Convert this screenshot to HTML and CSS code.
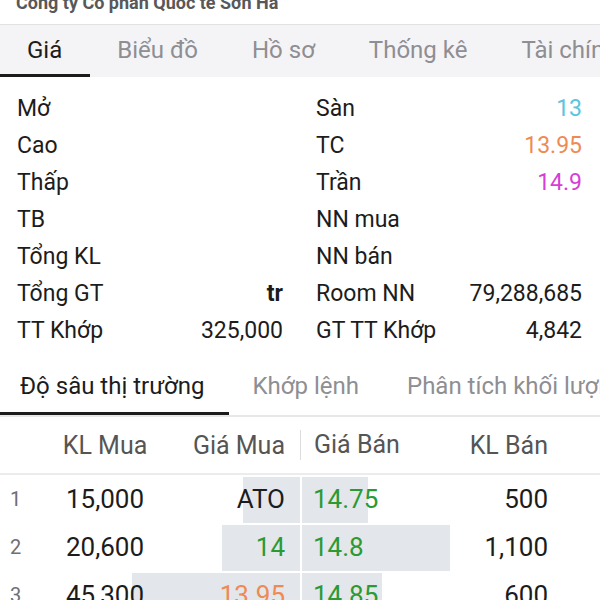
FILE: index.html
```html
<!DOCTYPE html>
<html lang="vi">
<head>
    <meta charset="UTF-8">
    <meta name="viewport" content="width=device-width, initial-scale=1.0">
    <title>Sơn Hà - Giá</title>
    <link rel="stylesheet" href="styles.css">
</head>
<body>
    <div class="stock-page">
        <div class="company-name"><span>Công ty Cổ phần Quốc tế Sơn Hà</span></div>

        <ul class="main-tabs">
            <li class="active">Giá</li>
            <li>Biểu đồ</li>
            <li>Hồ sơ</li>
            <li>Thống kê</li>
            <li>Tài chính</li>
        </ul>

        <div class="info-grid">
            <div class="info-col">
                <p class="info-row"><span>Mở</span><span></span></p>
                <p class="info-row"><span>Cao</span><span></span></p>
                <p class="info-row"><span>Thấp</span><span></span></p>
                <p class="info-row"><span>TB</span><span></span></p>
                <p class="info-row"><span>Tổng KL</span><span></span></p>
                <p class="info-row"><span>Tổng GT</span><span class="unit">tr</span></p>
                <p class="info-row"><span>TT Khớp</span><span>325,000</span></p>
            </div>
            <div class="info-col">
                <p class="info-row"><span>Sàn</span><span class="floor">13</span></p>
                <p class="info-row"><span>TC</span><span class="ref">13.95</span></p>
                <p class="info-row"><span>Trần</span><span class="ceil">14.9</span></p>
                <p class="info-row"><span>NN mua</span><span></span></p>
                <p class="info-row"><span>NN bán</span><span></span></p>
                <p class="info-row"><span>Room NN</span><span>79,288,685</span></p>
                <p class="info-row"><span>GT TT Khớp</span><span>4,842</span></p>
            </div>
        </div>

        <ul class="sub-tabs">
            <li class="active">Độ sâu thị trường</li>
            <li>Khớp lệnh</li>
            <li>Phân tích khối lượng</li>
        </ul>

        <div class="depth">
            <div class="depth-head">
                <span></span>
                <span class="c-klmua">KL Mua</span>
                <span class="c-giamua">Giá Mua</span>
                <span class="c-giaban">Giá Bán</span>
                <span class="c-klban">KL Bán</span>
            </div>
            <div class="depth-row">
                <i class="bar bar-buy" style="width: 57px"></i>
                <i class="bar bar-sell" style="width: 66px"></i>
                <span class="c-idx">1</span>
                <span class="c-klmua">15,000</span>
                <span class="c-giamua">ATO</span>
                <span class="c-giaban up">14.75</span>
                <span class="c-klban">500</span>
            </div>
            <div class="depth-row">
                <i class="bar bar-buy" style="width: 78px"></i>
                <i class="bar bar-sell" style="width: 148px"></i>
                <span class="c-idx">2</span>
                <span class="c-klmua">20,600</span>
                <span class="c-giamua up">14</span>
                <span class="c-giaban up">14.8</span>
                <span class="c-klban">1,100</span>
            </div>
            <div class="depth-row">
                <i class="bar bar-buy" style="width: 168px"></i>
                <i class="bar bar-sell" style="width: 80px"></i>
                <span class="c-idx">3</span>
                <span class="c-klmua">45,300</span>
                <span class="c-giamua ref">13.95</span>
                <span class="c-giaban up">14.85</span>
                <span class="c-klban">600</span>
            </div>
        </div>
    </div>
</body>
</html>
```

FILE: styles.css
```css
body {margin: 0; background: #fff; font-family: Roboto, "Noto Sans", sans-serif; color: #1c1c1c;}
.stock-page {width: 600px; height: 600px; overflow: hidden;}

/* 회사명 - 위쪽이 잘려 보임 */
.company-name {height: 24px; overflow: hidden; padding-left: 16px;}
.company-name span {display: block; margin-top: -8px; line-height: 22px; font-size: 18px; font-weight: bold; color: #58585a;}

.main-tabs {display: flex; margin: 0; padding: 0; list-style: none; height: 52px; background: #f4f4f6; border-top: 1px solid #e2e2e4; white-space: nowrap;}
.main-tabs li {padding: 0 27px; line-height: 50px; font-size: 24px; color: #8e8e93; border-bottom: 3px solid transparent;}
.main-tabs li.active {padding: 0 28px 0 27px; color: #1c1c1c; border-bottom-color: #1c1c1c;}

.info-grid {display: grid; grid-template-columns: 1fr 1fr; column-gap: 33px; padding: 13px 18px 0 17px;}
.info-row {display: flex; justify-content: space-between; margin: 0; height: 37px; line-height: 37px; font-size: 23px;}
.info-row .unit {font-weight: bold;}
.floor {color: #5cc4dc;}
.ref {color: #ef8a52;}
.ceil {color: #d63fd6;}
.up {color: #2b9a33;}

.sub-tabs {display: flex; margin: 0; padding: 0; list-style: none; height: 55px; margin-top: 11px; border-bottom: 2px solid #e8e8ea; white-space: nowrap;}
.sub-tabs li {padding: 0 24px; line-height: 52px; font-size: 24px; color: #8e8e93; border-bottom: 3px solid transparent;}
.sub-tabs li:first-child {padding-left: 20px;}
.sub-tabs li.active {color: #1c1c1c; border-bottom-color: #1c1c1c;}

.depth-head, .depth-row {display: grid; grid-template-columns: 40px 130px 130px 130px 1fr; align-items: center; font-size: 26px;}
.depth-head {height: 56px; border-bottom: 2px solid #ececee; color: #555; font-size: 25px;}
.depth-head .c-giaban {border-left: 1px solid #dcdcde; line-height: 30px;}
.depth-row {position: relative; height: 48px;}
.depth-row span {position: relative;}
.c-idx {padding-left: 10px; font-size: 20px; color: #6f6f72;}
.c-klmua {text-align: center;}
.c-giamua {text-align: right; padding-right: 15px;}
.c-giaban {padding-left: 13px;}
.c-klban {text-align: right; padding-right: 52px;}

/* 잔량 막대 */
.bar {position: absolute; top: 2px; bottom: 0; background: #e3e6ea;}
.bar-buy {right: 300px;}
.bar-sell {left: 302px;}
```
